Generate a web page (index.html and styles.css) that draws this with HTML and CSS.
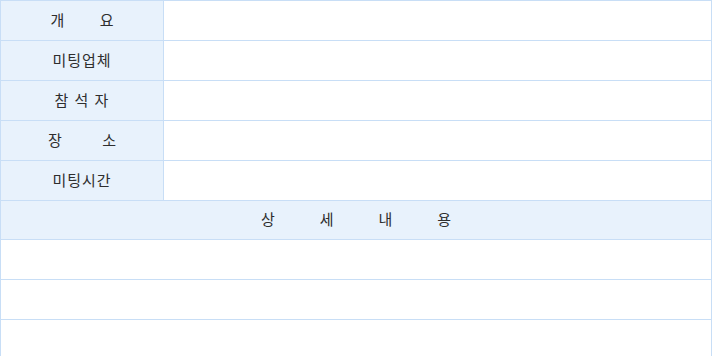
FILE: index.html
```html
<!DOCTYPE html>
<html lang="ko">
<head>
    <meta charset="UTF-8">
    <meta name="viewport" content="width=device-width, initial-scale=1.0">
    <title>미팅 보고서</title>
    <link rel="stylesheet" href="styles.css">
</head>
<body>
    <table class="report">
        <colgroup>
            <col class="col-label">
            <col>
        </colgroup>
        <tr>
            <th><span class="spread">개 요</span></th>
            <td></td>
        </tr>
        <tr>
            <th>미팅업체</th>
            <td></td>
        </tr>
        <tr>
            <th>참 석 자</th>
            <td></td>
        </tr>
        <tr>
            <th><span class="spread wide">장 소</span></th>
            <td></td>
        </tr>
        <tr>
            <th>미팅시간</th>
            <td></td>
        </tr>
        <tr class="detail-row">
            <th colspan="2"><span class="spread detail">상 세 내 용</span></th>
        </tr>
        <tr><td colspan="2"></td></tr>
        <tr><td colspan="2"></td></tr>
        <tr><td colspan="2"></td></tr>
    </table>
</body>
</html>
```

FILE: styles.css
```css
* {
    margin: 0;
    padding: 0;
    box-sizing: border-box;
}

body {
    font-family: "Noto Sans CJK KR", "Noto Sans", sans-serif;
    color: #2e2e2e;
    background: #fff;
}

.report {
    width: 712px;
    border-collapse: collapse;
    border: 1px solid #b8d7f6;
    table-layout: fixed;
}

.col-label {
    width: 163px;
}

.report th,
.report td {
    height: 40px;
    border: 1px solid #c8def6;
}

.report th {
    background: #e8f2fc;
    font-weight: normal;
    font-size: 15px;
    letter-spacing: 1px;
    text-align: center;
    padding-bottom: 3px;
}

.report .detail-row th {
    height: 39px;
}

/* spread the letters of a label across a fixed width */
.spread {
    display: inline-block;
    width: 63px;
    text-align: justify;
    text-align-last: justify;
    letter-spacing: 0;
}

.spread.wide {
    width: 68px;
}

.spread.detail {
    width: 190px;
}
```
